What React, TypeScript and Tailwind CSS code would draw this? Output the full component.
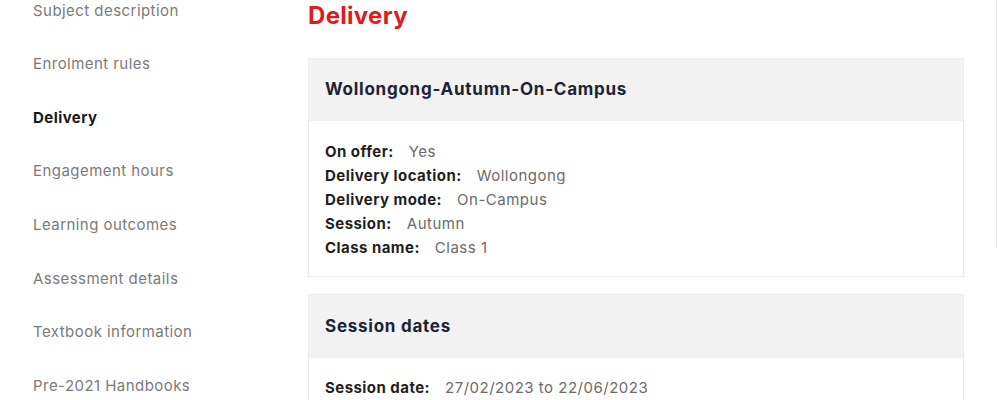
const navItems = [
  'Subject description',
  'Enrolment rules',
  'Delivery',
  'Engagement hours',
  'Learning outcomes',
  'Assessment details',
  'Textbook information',
  'Pre-2021 Handbooks',
];

function Field({ label, value }: { label: string; value: string }) {
  return (
    <div className="flex gap-[15px] h-6 items-center">
      <span className="font-bold text-[#1f1f1f]">{label}</span>
      <span className="text-[#6b6b6b] tracking-[0.5px]">{value}</span>
    </div>
  );
}

export default function App() {
  return (
    <div className="relative w-[1000px] h-[400px] overflow-hidden bg-white font-['Inter',sans-serif] text-[15px] tracking-[0.45px]">
      <div className="flex">
        <nav className="w-[308px] shrink-0 pl-[33px] -mt-[16px]">
          {navItems.map((item) => (
            <div
              key={item}
              className={
                'h-[53.6px] flex items-center ' +
                (item === 'Delivery' ? 'font-bold text-[#1a1a1a]' : 'text-[#7a7a7a]')
              }
            >
              {item}
            </div>
          ))}
        </nav>
        <main className="w-[656px]">
          <h1 className="text-[24px] font-bold text-[#dc1c22] h-[34px] leading-[34px] -mt-[1px] tracking-[0.3px]">Delivery</h1>
          <section className="mt-[25px] border border-[#ececec]">
            <div className="bg-[#f2f2f2] h-[62px] flex items-center px-4">
              <h2 className="text-[17px] font-bold text-[#1c2333] tracking-[0.75px]">Wollongong-Autumn-On-Campus</h2>
            </div>
            <div className="px-4 pt-[19px] pb-4">
              <Field label="On offer:" value="Yes" />
              <Field label="Delivery location:" value="Wollongong" />
              <Field label="Delivery mode:" value="On-Campus" />
              <Field label="Session:" value="Autumn" />
              <Field label="Class name:" value="Class 1" />
            </div>
          </section>
          <section className="mt-[17px] border border-[#ececec]">
            <div className="bg-[#f2f2f2] h-[63px] flex items-center px-4">
              <h2 className="text-[17px] font-bold text-[#1c2333] tracking-[0.75px]">Session dates</h2>
            </div>
            <div className="px-4 pt-[18px] pb-4">
              <Field label="Session date:" value="27/02/2023 to 22/06/2023" />
            </div>
          </section>
        </main>
      </div>
      <div className="absolute right-[3px] top-0 h-[248px] w-px bg-[#ececec]" />
    </div>
  );
}
